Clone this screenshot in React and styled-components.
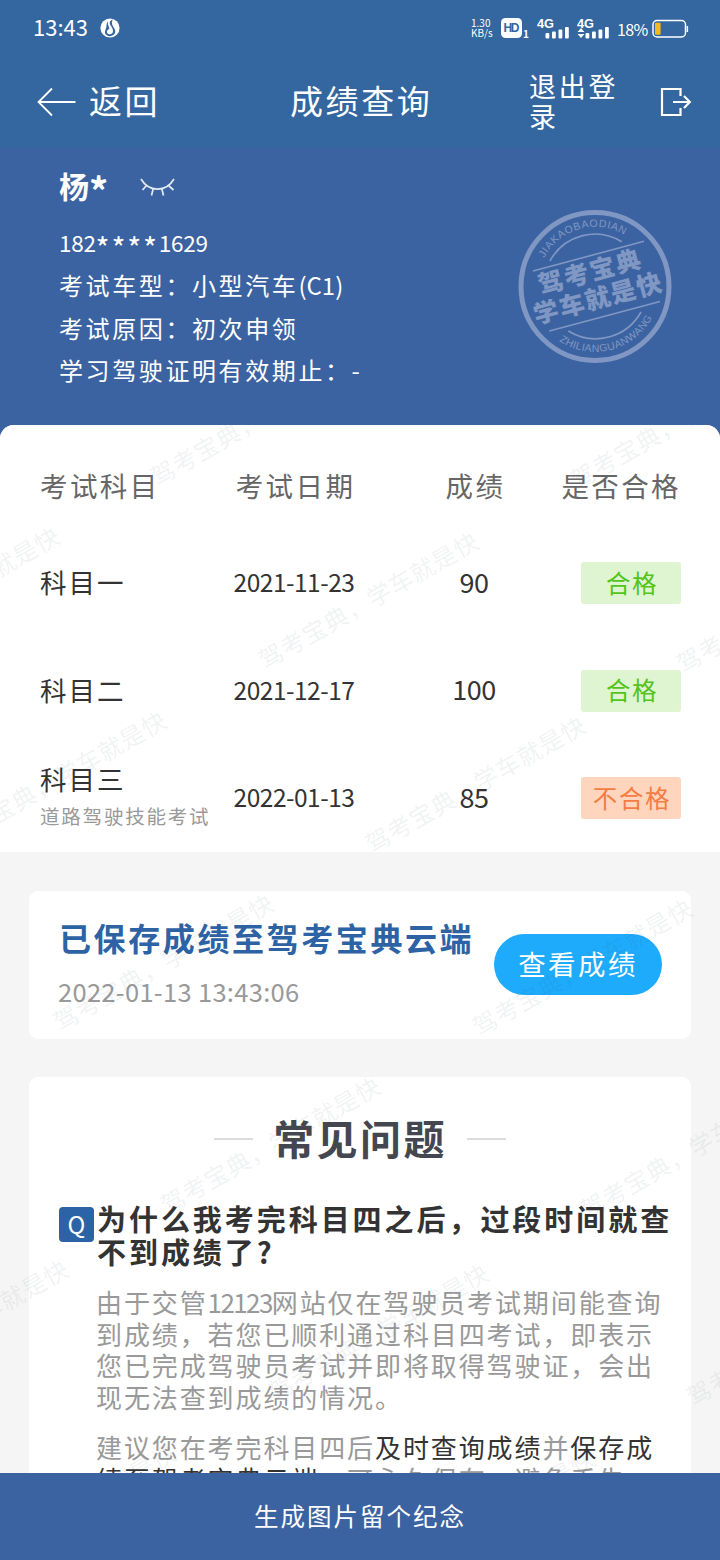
import styled, { createGlobalStyle } from "styled-components";

const rows = [
    { name: "科目一", date: "2021-11-23", score: "90", pass: true },
    { name: "科目二", date: "2021-12-17", score: "100", pass: true },
    {
        name: "科目三",
        desc: "道路驾驶技能考试",
        date: "2022-01-13",
        score: "85",
        pass: false,
    },
];

// bottom-left corner of every watermark, relative to the content area
const marks = [
    [150, 60],
    [570, 63],
    [-161, 238],
    [258, 243],
    [676, 247],
    [-54, 422],
    [365, 427],
    [53, 605],
    [472, 610],
    [160, 788],
    [580, 793],
    [-152, 971],
    [268, 975],
    [686, 980],
    [-44, 1155],
    [375, 1160],
];

const Signal = ({ arrows }) => (
    <svg width="33" height="24" viewBox="0 0 33 24" fill="#fff">
        <text
            x="0"
            y="11.5"
            fontSize="13.5"
            fontWeight="700"
            fontFamily="Liberation Sans"
            textLength="17"
            lengthAdjust="spacingAndGlyphs"
        >
            4G
        </text>
        {arrows ? <path d="M4 12l3.4 4H.6zM4 22l3.4-4H.6z" /> : null}
        <rect x="8.5" y="17" width="3.8" height="5.5" rx="1" />
        <rect x="15" y="15.5" width="3.8" height="7" rx="1" />
        <rect x="21.5" y="13.5" width="3.8" height="9" rx="1" />
        <rect x="28" y="11" width="3.8" height="11.5" rx="1" />
    </svg>
);

const Seal = () => (
    <svg width="154" height="154" viewBox="0 0 154 154" fill="none" stroke="#8097c3">
        <circle cx="77" cy="76.5" r="74" strokeWidth="5" />
        <path d="M15 61L126 31.3M31.3 121L142 91.5" strokeWidth="1.6" />
        <path d="M32 51A51 51 0 0 1 103.7 31.7M50.3 121A52 52 0 0 0 123 102" strokeWidth="1.6" />
        <path id="sealTop" d="M26.3 48A57.5 57.5 0 0 1 112 28.5" stroke="none" />
        <path id="sealBottom" d="M41 131A65 65 0 0 0 137 102" stroke="none" />
        <g fill="#8097c3" stroke="none">
            <text fontSize="10.5" fontFamily="Liberation Sans">
                <textPath href="#sealTop" textLength="93">
                    JIAKAOBAODIAN
                </textPath>
            </text>
            <text fontSize="10.5" fontFamily="Liberation Sans">
                <textPath href="#sealBottom" textLength="108">
                    ZHILIANGUANWANG
                </textPath>
            </text>
            <g fontSize="25" fontWeight="900" letterSpacing="1.6" textAnchor="middle">
                <text transform="translate(74.5 70.5) rotate(-15)">驾考宝典</text>
                <text transform="translate(82.5 97) rotate(-15)">学车就是快</text>
            </g>
        </g>
    </svg>
);

const App = () => {
    return (
        <Page>
            <GlobalStyle />
            <StatusBar>
                <Clock>13:43</Clock>
                <svg width="20" height="20" viewBox="0 0 20 20">
                    <circle cx="10" cy="10" r="9.6" fill="#fff" />
                    <path
                        d="M12.8 1.5C9.5 2.8 9 5 10.6 7.4C12 9.6 13.4 11.3 12.9 14C12.3 16.6 8.3 17 7.2 14.9C6.2 12.8 8 11.3 9.3 11.2C9.3 8.8 7.2 6.4 8 3.6C5.6 6.4 7.2 8.6 5.6 11.4C4 14.4 5.5 18 10 18.2C14.8 18 16.4 13.8 14.4 10.6C12.7 8 10.8 5 12.8 1.5Z"
                        fill="#3466a0"
                    />
                </svg>
                <Spacer />
                <Speed>
                    <span>1.30</span>
                    <span>KB/s</span>
                </Speed>
                <svg width="28" height="22" viewBox="0 0 28 22">
                    <rect x="0" y="1" width="21" height="20" rx="4.5" fill="#fff" />
                    <text
                        x="2.6"
                        y="15.4"
                        fontSize="12"
                        fontWeight="700"
                        fontFamily="Liberation Sans"
                        fill="#3466a0"
                        textLength="15.8"
                    >
                        HD
                    </text>
                    <text x="22" y="21" fontSize="10" fontWeight="700" fill="#fff">
                        1
                    </text>
                </svg>
                <SignalGroup>
                    <Signal />
                    <Signal arrows />
                </SignalGroup>
                <Percent>18%</Percent>
                <svg width="37" height="20" viewBox="0 0 37 20">
                    <rect x="1" y="2.5" width="32.5" height="16.5" rx="4" fill="none" stroke="#fff" strokeWidth="1.5" />
                    <rect x="3" y="4.8" width="5.6" height="12" rx="1" fill="#f5b91c" />
                    <rect x="34.6" y="8" width="1.5" height="6" fill="#fff" />
                </svg>
            </StatusBar>

            <NavBar>
                <Back>
                    <svg width="39" height="30" viewBox="0 0 39 30" fill="none" stroke="#fff" strokeWidth="1.8">
                        <path d="M15 1.5L1.5 15L15 28.5M1.5 15H38.5" />
                    </svg>
                    <NavText>返回</NavText>
                </Back>
                <NavText>成绩查询</NavText>
                <Logout>
                    <LogoutText>退出登录</LogoutText>
                    <svg width="31" height="30" viewBox="0 0 31 30" fill="none" stroke="#fff" strokeWidth="2.2">
                        <path d="M20.5 9V2H2V28H20.5V21M13 15H29.5M24 9L29.8 15L24 21" />
                    </svg>
                </Logout>
            </NavBar>

            <Profile>
                <ProfileInfo>
                    <NameLine>
                        <span>
                            杨<Star $size="38px">*</Star>
                        </span>
                        <svg width="36" height="20" viewBox="0 0 36 20" fill="none" stroke="#e3e9f3" strokeWidth="1.7">
                            <path d="M1 2C9 15.5 26 15.5 34 2M6 9L2.5 13M13 12.5L11.5 18.5M22 12.5L23.5 18.5M29 9L33.5 13" />
                        </svg>
                    </NameLine>
                    <Phone>
                        182<Star $size="30px">****</Star>1629
                    </Phone>
                    <InfoLine>
                        考试车型：小型汽车<Narrow $gap="0px">(C1)</Narrow>
                    </InfoLine>
                    <InfoLine>考试原因：初次申领</InfoLine>
                    <InfoLine>学习驾驶证明有效期止：-</InfoLine>
                </ProfileInfo>
                <Seal />
            </Profile>

            <Content>
                <ScorePanel>
                    <ScoreHead>
                        <span>考试科目</span>
                        <span>考试日期</span>
                        <span>成绩</span>
                        <span>是否合格</span>
                    </ScoreHead>
                    {rows.map((it) => (
                        <ScoreRow key={it.name}>
                            <Subject>
                                {it.name}
                                {it.desc ? <SubjectDesc>{it.desc}</SubjectDesc> : null}
                            </Subject>
                            <DateText>{it.date}</DateText>
                            <Score>{it.score}</Score>
                            <Tag $pass={it.pass}>{it.pass ? "合格" : "不合格"}</Tag>
                        </ScoreRow>
                    ))}
                </ScorePanel>

                <SavedCard>
                    <div>
                        <SavedTitle>已保存成绩至驾考宝典云端</SavedTitle>
                        <SavedTime>2022-01-13 13:43:06</SavedTime>
                    </div>
                    <ViewButton>查看成绩</ViewButton>
                </SavedCard>

                <FaqCard>
                    <FaqTitle>常见问题</FaqTitle>
                    <Question>
                        <QBadge>Q</QBadge>
                        <QuestionText>
                            为什么我考完科目四之后，过段时间就查
                            <br />
                            不到成绩了?
                        </QuestionText>
                    </Question>
                    <Answer>
                        由于交管<Narrow $gap="-1.6px">12123</Narrow>网站仅在驾驶员考试期间能查询
                        <br />
                        到成绩，若您已顺利通过科目四考试，即表示
                        <br />
                        您已完成驾驶员考试并即将取得驾驶证，会出
                        <br />
                        现无法查到成绩的情况。
                    </Answer>
                    <Answer>
                        建议您在考完科目四后<b>及时查询成绩</b>并<b>保存成</b>
                        <br />
                        <b>绩至驾考宝典云端</b>，可永久保存，避免丢失
                    </Answer>
                </FaqCard>

                <Watermarks>
                    {marks.map(([x, y]) => (
                        <Mark key={x + "-" + y} style={{ left: x, top: y }}>
                            驾考宝典，学车就是快
                        </Mark>
                    ))}
                </Watermarks>
            </Content>

            <BottomBar>生成图片留个纪念</BottomBar>
        </Page>
    );
};

const GlobalStyle = createGlobalStyle`
    * {
        box-sizing: border-box;
    }
    body {
        margin: 0;
        font-family: "Noto Sans CJK SC", sans-serif;
        white-space: nowrap;
    }
    svg {
        display: block;
        flex-shrink: 0;
        overflow: visible;
    }
`;
const Page = styled.div`
    display: flex;
    flex-direction: column;
    width: 720px;
    height: 1560px;
    overflow: hidden;
    background-color: #3c63a1;
`;
const StatusBar = styled.div`
    display: flex;
    align-items: center;
    height: 56px;
    padding: 0 31px 0 33px;
    flex-shrink: 0;
    color: #fff;
    background-color: #3466a0;
`;
const Clock = styled.div`
    width: 67px;
    font-size: 22px;
    line-height: 52px;
    padding-bottom: 4px;
`;
const Spacer = styled.div`
    flex: 1;
`;
const Speed = styled.div`
    display: flex;
    flex-direction: column;
    width: 30px;
    font-size: 10px;
    line-height: 10px;
`;
const SignalGroup = styled.div`
    display: flex;
    gap: 7px;
    margin: 0 7px 0 8px;
    padding-bottom: 1px;
`;
const Percent = styled.div`
    width: 35px;
    padding-top: 2px;
    font-size: 16px;
    letter-spacing: -0.6px;
`;
const NavBar = styled.div`
    display: grid;
    grid-template-columns: 253px 239px 162px;
    align-items: center;
    height: 92px;
    padding: 0 29px 0 37px;
    flex-shrink: 0;
    color: #fff;
    background-color: #3466a0;
`;
const Back = styled.div`
    display: flex;
    align-items: center;
    gap: 13px;
`;
const NavText = styled.div`
    padding-bottom: 4px;
    font-size: 33px;
    line-height: 40px;
    letter-spacing: 2.6px;
`;
const Logout = styled.div`
    display: flex;
    justify-content: space-between;
    align-items: center;
`;
const LogoutText = styled.div`
    width: 92px;
    padding-bottom: 2px;
    font-size: 27px;
    line-height: 30px;
    letter-spacing: 2.8px;
    white-space: normal;
`;
const Profile = styled.div`
    display: flex;
    justify-content: space-between;
    align-items: flex-start;
    height: 277px;
    padding: 0 48px 0 59px;
    flex-shrink: 0;
    color: #fff;

    > svg {
        margin-top: 62px;
    }
`;
const ProfileInfo = styled.div`
    display: flex;
    flex-direction: column;
    padding-top: 16px;
`;
const NameLine = styled.div`
    display: flex;
    align-items: center;
    gap: 30px;
    height: 42px;
    font-size: 30px;
    font-weight: 700;
    margin-bottom: 15px;

    svg {
        margin-top: 4px;
    }
`;
const Star = styled.span`
    font-size: ${(props) => props.$size};
    line-height: 0;
    vertical-align: -8px;
    letter-spacing: 1.8px;
`;
const Phone = styled.div`
    height: 43px;
    font-size: 22.5px;
    line-height: 43px;
    letter-spacing: -0.3px;
`;
const InfoLine = styled.div`
    font-size: 24px;
    line-height: 42.5px;
    letter-spacing: 2.6px;
`;
const Narrow = styled.span`
    letter-spacing: ${(props) => props.$gap};
`;
const Content = styled.div`
    position: relative;
    display: flex;
    flex-direction: column;
    flex: 1;
    min-height: 0;
    overflow: hidden;
    border-radius: 14px 14px 0 0;
    background-color: #f5f5f5;
`;
const ScorePanel = styled.div`
    height: 427px;
    padding: 20px 39px 0 40px;
    flex-shrink: 0;
    background-color: #fff;
`;
const ScoreRow = styled.div`
    display: grid;
    grid-template-columns: 154px 200px 160px 127px;
    align-items: center;
    justify-items: center;
    height: 107.5px;
    color: #333;

    > :first-child {
        justify-self: start;
    }
    > :last-child {
        justify-self: end;
    }
`;
const ScoreHead = styled(ScoreRow)`
    height: 84.5px;
    font-size: 27.5px;
    letter-spacing: 2.4px;
    color: #666;

    span {
        padding: 0 0 4px 3px;
    }
    > :first-child,
    > :last-child {
        padding-left: 0;
    }
`;
const Subject = styled.div`
    display: flex;
    flex-direction: column;
    padding-bottom: 2px;
    font-size: 26.5px;
    line-height: 38px;
    letter-spacing: 2px;
`;
const SubjectDesc = styled.div`
    width: 0;
    font-size: 19.5px;
    line-height: 36px;
    letter-spacing: 1.8px;
    color: #999;
`;
const DateText = styled.div`
    padding-bottom: 3px;
    font-size: 24.5px;
    letter-spacing: -0.5px;
`;
const Score = styled.div`
    padding-bottom: 4px;
    font-size: 27px;
    letter-spacing: -0.5px;
`;
const Tag = styled.div`
    display: flex;
    justify-content: center;
    align-items: center;
    width: 100px;
    height: 42px;
    padding: 0 0 2px 2px;
    border-radius: 3px;
    font-size: 24.5px;
    letter-spacing: 1.6px;
    color: ${(props) => (props.$pass ? "#52c41a" : "#f57c42")};
    background-color: ${(props) => (props.$pass ? "#dff5d1" : "#ffd6bd")};
`;
const SavedCard = styled.div`
    display: flex;
    justify-content: space-between;
    align-items: flex-start;
    height: 148px;
    margin: 39px 29px 0 29px;
    padding: 22px 29px 0 29px;
    flex-shrink: 0;
    border-radius: 9px;
    background-color: #fff;
`;
const SavedTitle = styled.div`
    padding-left: 1px;
    font-size: 32px;
    font-weight: 700;
    line-height: 48px;
    letter-spacing: 2.6px;
    color: #2d63a4;
`;
const SavedTime = styled.div`
    font-size: 25.5px;
    line-height: 59px;
    letter-spacing: 0.3px;
    color: #999;
`;
const ViewButton = styled.div`
    display: flex;
    justify-content: center;
    align-items: center;
    width: 168px;
    height: 61px;
    margin-top: 21px;
    margin-left: -20px;
    padding-bottom: 4px;
    border-radius: 31px;
    font-size: 27.5px;
    letter-spacing: 2.4px;
    color: #fff;
    background-color: #1eabfc;
`;
const FaqCard = styled.div`
    margin: 38px 29px 0 29px;
    padding: 30px 0 0 30px;
    flex-shrink: 0;
    border-radius: 9px;
    background-color: #fff;
`;
const FaqTitle = styled.div`
    display: flex;
    justify-content: center;
    align-items: center;
    gap: 20px;
    height: 59px;
    padding-right: 30px;
    font-size: 41px;
    font-weight: 700;
    letter-spacing: 2.4px;
    color: #44474f;

    &::before,
    &::after {
        content: "";
        width: 39px;
        height: 2px;
        margin-top: 5px;
        background-color: #dcdcdf;
    }
`;
const Question = styled.div`
    display: flex;
    align-items: flex-start;
    gap: 3px;
    margin-top: 36px;
`;
const QBadge = styled.div`
    width: 35px;
    height: 35px;
    margin-top: 5px;
    border-radius: 4px;
    font-size: 24px;
    line-height: 33px;
    text-align: center;
    color: #fff;
    background-color: #2b63a6;
`;
const QuestionText = styled.div`
    font-size: 29px;
    font-weight: 700;
    line-height: 32.5px;
    letter-spacing: 2.95px;
    color: #333;
`;
const Answer = styled.div`
    margin: 19px 0 0 37px;
    font-size: 26px;
    line-height: 31.5px;
    letter-spacing: 1.9px;
    color: #999;

    b {
        font-weight: 400;
        color: #333;
    }
`;
const Watermarks = styled.div`
    position: absolute;
    inset: 0;
    overflow: hidden;
    pointer-events: none;
`;
const Mark = styled.div`
    position: absolute;
    margin: -25px 0 0 10px;
    font-size: 24px;
    line-height: 32px;
    letter-spacing: 0.9px;
    transform: rotate(-29.7deg);
    transform-origin: 0 100%;
    color: rgba(60, 70, 80, 0.085);
`;
const BottomBar = styled.div`
    display: flex;
    justify-content: center;
    align-items: center;
    height: 87px;
    padding-bottom: 2px;
    flex-shrink: 0;
    font-size: 24.5px;
    letter-spacing: 2px;
    color: #fff;
    background-color: #3c63a1;
`;

export default App;
